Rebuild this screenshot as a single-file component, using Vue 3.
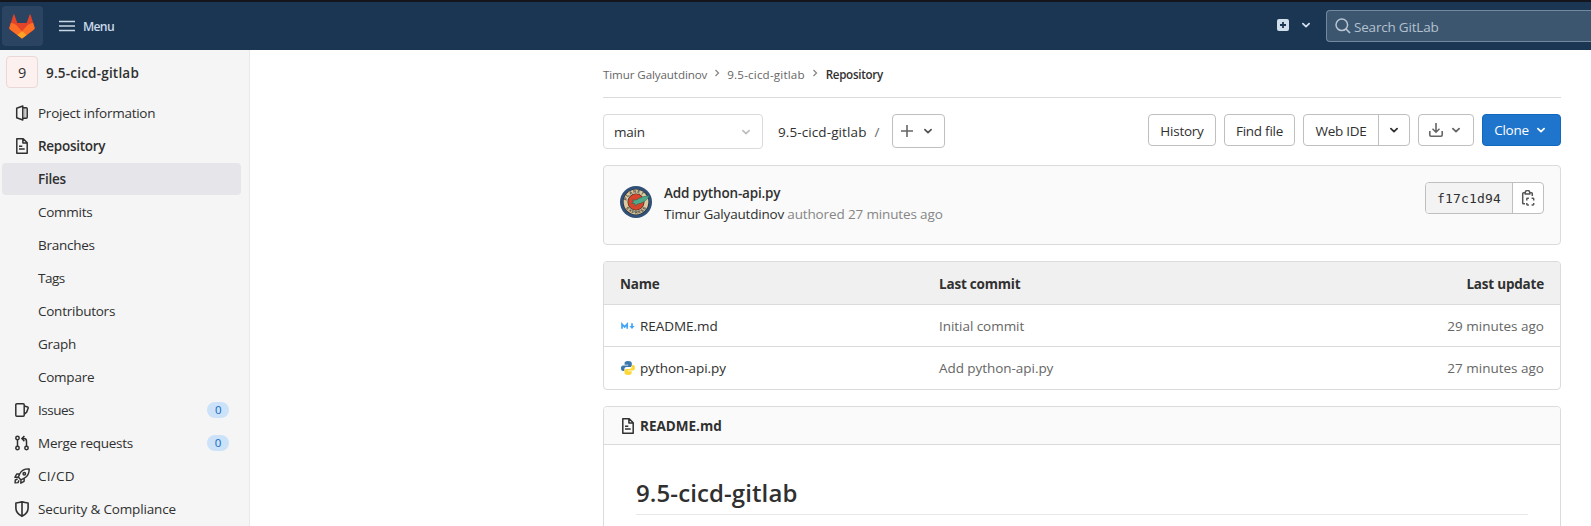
<script setup>
const nav = [
  { label: 'Project information', icon: 'project' },
  { label: 'Repository', icon: 'doc', bold: true },
  { label: 'Files', active: true, bold: true },
  { label: 'Commits' },
  { label: 'Branches' },
  { label: 'Tags', tight: true },
  { label: 'Contributors' },
  { label: 'Graph' },
  { label: 'Compare' },
  { label: 'Issues', icon: 'issues', count: 0, tight: true },
  { label: 'Merge requests', icon: 'merge', count: 0 },
  { label: 'CI/CD', icon: 'rocket', loose: true },
  { label: 'Security & Compliance', icon: 'shield', wide: true },
]
const files = [
  { name: 'README.md', kind: 'md', commit: 'Initial commit', updated: '29 minutes ago' },
  { name: 'python-api.py', kind: 'py', commit: 'Add python-api.py', updated: '27 minutes ago' },
]
</script>

<template>
  <div class="page">
    <svg width="0" height="0" class="defs">
      <symbol id="chevron" viewBox="0 0 16 16"><path d="M4.900 6.700 8 9.600l3.100-2.900" fill="none" stroke="currentColor" stroke-width="1.800" stroke-linecap="round" stroke-linejoin="round" /></symbol>
      <symbol id="doc" viewBox="0 0 16 16"><path d="M2.800.800h6.400l4 4v10.400H2.800zM8.900 1v4.100h4M5 8.200h3.300M5 11h5.700" fill="none" stroke="currentColor" stroke-width="1.500" stroke-linejoin="round" /></symbol>
      <symbol id="project" viewBox="0 0 16 16"><path d="M8.800 1v14L2.700 12.800V3.200zM9 2.800h3.200a1 1 0 0 1 1 1v8.400a1 1 0 0 1-1 1H9" fill="none" stroke="currentColor" stroke-width="1.500" stroke-linejoin="round" /><path d="M10.900 3v10" stroke="currentColor" stroke-width=".5" /></symbol>
      <symbol id="issues" viewBox="0 0 16 16"><path d="M2.800 1.800h6.400a1 1 0 0 1 1 1v10.400a1 1 0 0 1-1 1H2.800a1 1 0 0 1-1-1V2.800a1 1 0 0 1 1-1zM10.400 4.100l3.200.800c.5.200.7.600.6 1l-1.500 4.200-2.300 2" fill="none" stroke="currentColor" stroke-width="1.500" stroke-linejoin="round" /></symbol>
      <symbol id="merge" viewBox="0 0 16 16"><g fill="none" stroke="currentColor" stroke-width="1.500"><circle cx="3.500" cy="3" r="1.700" /><circle cx="3.500" cy="13" r="1.700" /><circle cx="12.500" cy="13" r="1.700" /><path d="M3.500 4.700v6.600M12.500 11.300V6.200a2.600 2.600 0 0 0-2.600-2.600H8.200M10.400 1 7.900 3.600l2.500 2.600" /></g></symbol>
      <symbol id="rocket" viewBox="0 0 16 16"><g fill="none" stroke="currentColor" stroke-width="1.450" stroke-linejoin="round"><path d="M15.200.900c-4.600-.2-7.800 1.500-9.400 4.900L4.300 9.100l2.700 2.800 3.300-1.700c3.400-1.700 5-4.800 4.900-9.300zM5.600 5.900 2.700 6 .9 9.300l3.300-.2M10.200 10.300l-.1 3-3.300 1.900.2-3.300M3.600 11l-2.300 1-.2 2.900 2.900-.3 1-2.200" /><circle cx="10.300" cy="5.700" r="1.250" /></g></symbol>
      <symbol id="shield" viewBox="0 0 16 16"><path d="M8 .8c2 .7 4 1.100 6.100 1.200V7c0 3.700-2.200 6.500-6.100 8.200C4.100 13.500 1.900 10.700 1.900 7V2C4 1.900 6 1.500 8 .8zM8 1v14" fill="none" stroke="currentColor" stroke-width="1.600" stroke-linejoin="round" /></symbol>
      <symbol id="md" viewBox="0 0 16 16"><path d="M2 10.700V6.200L4.600 8.900l2.600-2.700v4.500M12 5.200v4" fill="none" stroke="#42a5f5" stroke-width="1.700" /><path d="M9.400 8h5.200L12 11z" fill="#42a5f5" /></symbol>
      <symbol id="py" viewBox="0 0 16 16"><path d="M7.900 1C5.300 1 4.600 2 4.600 3.200v1.500h3.600v.7H3.100C1.600 5.400 1 6.500 1 8.200s.8 2.800 2 2.800h1.400V9.200c0-1.200.9-2.100 2.200-2.100h3.500c1 0 1.700-.8 1.700-1.800V3.200C11.800 1.700 10.400 1 7.900 1z" fill="#3c78aa" /><path d="M8.300 15c2.600 0 3.400-1 3.400-2.200v-1.500H8v-.7h5c1.500 0 2-1.200 2-2.800S14.300 5 13 5h-1.200v1.800c0 1.200-.9 2.100-2.200 2.100H6.200c-1 0-1.700.8-1.700 1.800v2.100C4.500 14.300 5.900 15 8.300 15z" fill="#fdd835" /></symbol>
    </svg>

    <header class="topbar">
      <div class="logo">
        <svg width="26" height="25" viewBox="0 0 26 25">
          <path d="M13 24.500 1.300 15.800A2.300 2.300 0 0 1 .5 13.200L4.300 1.100q.6-1.500 1.200 0l2.800 7.900h9.400l2.800-7.900q.6-1.500 1.200 0l3.800 12.100a2.300 2.300 0 0 1-.8 2.600z" fill="#e24329" />
          <path d="M13 24.500 1.300 15.800A2.300 2.300 0 0 1 .5 13.200L1.800 9.100c2.300.2 4.400 1.100 6.300 2.600l4.900 5.500 4.900-5.500c1.900-1.500 4-2.400 6.300-2.600l1.300 4.100a2.300 2.300 0 0 1-.8 2.600z" fill="#fc6d26" />
          <path d="M13 24.500 8.300 20.900 13 17.200l4.700 3.700z" fill="#fca326" />
        </svg>
      </div>
      <svg class="burger" width="16" height="12"><path d="M0 1.500h16M0 6h16M0 10.500h16" stroke="#c9d6e4" stroke-width="1.600" /></svg>
      <span class="menu">Menu</span>
      <div class="spacer"></div>
      <svg class="plusbox" width="12" height="12"><rect width="12" height="12" rx="2" fill="#d1dfed" /><path d="M6 3v6M3 6h6" stroke="#1b3653" stroke-width="1.800" /></svg>
      <svg class="topchev" width="16" height="16"><use href="#chevron" /></svg>
      <div class="search">
        <svg width="16" height="16"><circle cx="6.800" cy="6.800" r="5.800" fill="none" stroke="#b8c6d4" stroke-width="1.500" /><path d="m11 11 4 4" stroke="#b8c6d4" stroke-width="1.700" /></svg>
        <span>Search GitLab</span>
      </div>
    </header>

    <div class="body">
      <aside class="sidebar">
        <div class="project"><span class="avatar">9</span><span class="pname">9.5-cicd-gitlab</span></div>
        <div v-for="n in nav" :key="n.label" class="item" :class="{ active: n.active, bold: n.bold, wide: n.wide, loose: n.loose, tight: n.tight }">
          <span class="ico"><svg v-if="n.icon" width="16" height="16"><use :href="'#' + n.icon" /></svg></span>
          <span class="label">{{ n.label }}</span>
          <span v-if="n.count !== undefined" class="count">{{ n.count }}</span>
        </div>
      </aside>

      <main class="main">
        <nav class="crumbs">
          <span>Timur Galyautdinov</span>
          <svg width="8" height="8"><path d="m2.500 1 3 3-3 3" /></svg>
          <span class="repo">9.5-cicd-gitlab</span>
          <svg width="8" height="8"><path d="m2.500 1 3 3-3 3" /></svg>
          <b>Repository</b>
        </nav>

        <div class="tools">
          <div class="select"><span>main</span><svg width="16" height="16"><use href="#chevron" /></svg></div>
          <span class="path">9.5-cicd-gitlab</span><span class="slash">/</span>
          <div class="btn add">
            <svg width="14" height="14"><path d="M7 1v12M1 7h12" stroke="#666" stroke-width="1.600" /></svg>
            <svg width="16" height="16"><use href="#chevron" /></svg>
          </div>
          <div class="spacer"></div>
          <div class="btn history">History</div>
          <div class="btn find">Find file</div>
          <div class="btn ide"><span>Web IDE</span><i><svg width="16" height="16"><use href="#chevron" /></svg></i></div>
          <div class="btn down">
            <svg width="16" height="16"><path d="M8 1v9M4.500 6.800 8 10.200l3.500-3.400M1.800 9v4a1.200 1.200 0 0 0 1.200 1.200h10a1.200 1.200 0 0 0 1.200-1.200V9" fill="none" stroke="#666" stroke-width="1.600" /></svg>
            <svg width="16" height="16"><use href="#chevron" /></svg>
          </div>
          <div class="btn clone">Clone<svg width="16" height="16"><use href="#chevron" /></svg></div>
        </div>

        <section class="commit">
          <svg class="face" width="32" height="32" viewBox="0 0 32 32">
            <defs>
              <path id="arcTop" d="M7 19.300A9.500 9.500 0 1 1 25 19.300" />
              <path id="arcBottom" d="M4.300 18A11.900 11.900 0 0 0 27.700 18" />
            </defs>
            <circle cx="16" cy="16" r="16" fill="#305078" />
            <circle cx="16" cy="16" r="13" fill="#252b30" />
            <circle cx="16" cy="16" r="12.400" fill="#dcc9a0" />
            <circle cx="16" cy="16" r="8.500" fill="#29302f" />
            <circle cx="16" cy="16" r="7.900" fill="#d7452c" />
            <text class="ring"><textPath href="#arcTop" startOffset="13%">PLANET</textPath></text>
            <text class="ring"><textPath href="#arcBottom" startOffset="14%">EXPRESS</textPath></text>
            <path d="M29.500 9.800c-5 .1-9.500 1.900-13.300 4.100l-3.900.200 1.600 1.500-2.200 1.700 3.200.4.600 2.500 1.800-2.200c5.100-.6 9.500-3.500 12.200-8.200z" fill="#4eaa8b" stroke="#255b50" stroke-width=".5" />
          </svg>
          <div class="info">
            <div class="subject">Add python-api.py</div>
            <div class="author"><span>Timur Galyautdinov</span> authored 27 minutes ago</div>
          </div>
          <div class="sha">
            <span>f17c1d94</span>
            <i><svg width="16" height="16"><g fill="none" stroke="#555" stroke-width="1.500"><path d="M5 13.700H3.500a.8.800 0 0 1-.8-.8V3.500a.8.800 0 0 1 .8-.8H5M10 2.700h1.500a.8.800 0 0 1 .8.800V6M5.300 3.900V2.200C5.300 0 9.700 0 9.700 2.200v1.700z" /><path d="M6.800 10.400V9a.7.700 0 0 1 .7-.7h1.400M11.600 8.300H13a.7.700 0 0 1 .7.700v1.400M13.700 12.900v1.400a.7.700 0 0 1-.7.700h-1.400M8.900 15H7.500a.7.700 0 0 1-.7-.7v-1.400" /></g></svg></i>
          </div>
        </section>

        <section class="table">
          <div class="row head"><span>Name</span><span>Last commit</span><span>Last update</span></div>
          <div v-for="f in files" :key="f.name" class="row">
            <span class="file"><svg width="16" height="16"><use :href="'#' + f.kind" /></svg>{{ f.name }}</span>
            <span>{{ f.commit }}</span><span class="when">{{ f.updated }}</span>
          </div>
        </section>

        <section class="readme">
          <div class="rhead"><svg width="16" height="16"><use href="#doc" /></svg><span>README.md</span></div>
          <div class="rbody"><h1>9.5-cicd-gitlab</h1></div>
        </section>
      </main>
    </div>
  </div>
</template>

<style>
body { margin: 0; overflow: hidden; background: #fff; }
</style>

<style scoped>
* { box-sizing: border-box; }
.page { width: 1591px; height: 526px; overflow: hidden; font: 13.5px/20px "Open Sans", "Noto Sans", sans-serif; letter-spacing: -.25px; color: #303030; white-space: nowrap; }
.defs { position: absolute; }
svg { flex: none; display: block; }
i { font-style: normal; }
.spacer { flex: 1; }
.topbar { height: 50px; background: #1b3653; border-top: 2px solid #15151d; display: flex; align-items: center; color: #d1dfed; }
.logo { width: 41px; height: 40px; margin-left: 2px; border-radius: 4px; background: #2a4461; display: flex; align-items: center; justify-content: center; }
.logo svg { margin-right: 1px; }
.burger { margin-left: 16px; }
.menu { margin: 2px 0 0 8px; font-size: 12.200px; font-weight: 600; letter-spacing: -.7px; color: #c9d8e8; }
.plusbox { margin-right: 9px; margin-top: -2px; }
.topchev { margin-right: 12px; margin-top: -2px; }
.search { width: 265px; height: 32px; border: 1px solid #7389a0; border-right: 0; border-radius: 4px 0 0 4px; background: #3d566f; display: flex; align-items: center; padding-left: 8px; gap: 3px; color: #b3c1cf; letter-spacing: -.2px; }
.search span { padding-top: 2px; }
.body { display: flex; height: 476px; }
.sidebar { width: 250px; background: #f5f5f5; border-right: 1px solid #e9e9e9; }
.project { display: flex; align-items: center; height: 32px; margin: 6px 0 9px 6px; }
.avatar { width: 32px; height: 32px; border: 1px solid #ead8d8; border-radius: 4px; background: #fcf1ef; text-align: center; line-height: 31px; font-size: 14.500px; }
.pname { margin-left: 8px; padding-top: 2px; font-weight: 600; letter-spacing: .2px; }
.item { height: 32px; margin: 0 8px 1px 2px; border-radius: 4px; display: flex; align-items: center; padding: 0 12px; }
.item.active { background: #e6e6ea; }
.item.bold { font-weight: 600; letter-spacing: -.28px; }
.item.wide { letter-spacing: -.15px; }
.item.loose { letter-spacing: .25px; }
.item.tight { letter-spacing: -.5px; }
.ico { width: 16px; margin-right: 8px; }
.count { margin-left: auto; width: 22px; height: 16px; border-radius: 8px; background: #cbe2f9; color: #1068bf; font-size: 11.500px; line-height: 16px; text-align: center; }
.main { margin-left: 353px; width: 958px; }
.crumbs { height: 48px; border-bottom: 1px solid #dbdbdb; display: flex; align-items: center; font-size: 11.600px; color: #666; gap: 6px; padding-top: 2px; letter-spacing: -.1px; }
.crumbs .repo { letter-spacing: .18px; }
.crumbs b { font-weight: 600; color: #303030; letter-spacing: -.3px; margin-left: 1px; }
.crumbs path { fill: none; stroke: #888; stroke-width: 1.300; }
.crumbs svg { margin-top: -3px; }
.tools { display: flex; align-items: flex-start; height: 67px; padding-top: 16px; }
.select { width: 160px; height: 35px; border: 1px solid #dbdbdb; border-radius: 4px; display: flex; align-items: center; justify-content: space-between; padding: 0 8px 0 10px; }
.select svg { color: #bfbfbf; }
.path { margin-left: 15px; line-height: 36px; letter-spacing: .1px; }
.slash { width: 6px; margin-left: 8px; line-height: 36px; color: #666; }
.btn { height: 32px; border: 1px solid #bfbfbf; border-radius: 4px; display: flex; align-items: center; justify-content: center; margin-left: 8px; line-height: 32px; }
.add { width: 53px; height: 34px; margin-left: 11px; gap: 6px; color: #555; }
.history { width: 68px; padding-top: 1px; }
.find { width: 71px; padding-top: 1px; }
.ide { width: 107px; }
.ide span { flex: 1; text-align: center; padding-top: 1px; }
.ide i { width: 31px; height: 30px; border-left: 1px solid #bfbfbf; display: flex; align-items: center; justify-content: center; }
.down { width: 56px; gap: 4px; color: #666; }
.clone { width: 79px; background: #1f75cb; border-color: #1068bf; color: #fff; gap: 4px; }
.commit { height: 80px; border: 1px solid #dbdbdb; border-radius: 4px; background: #fafafa; display: flex; align-items: flex-start; padding: 16px; }
.face { margin-top: 4px; }
.ring { font: 700 4.200px "Liberation Sans", sans-serif; fill: #393a36; letter-spacing: .7px; }
.info { margin: 1px 0 0 12px; line-height: 21px; }
.subject { font-weight: 600; letter-spacing: -.17px; }
.author { color: #868686; letter-spacing: -.14px; }
.author span { color: #303030; letter-spacing: -.2px; }
.sha { margin-left: auto; width: 119px; height: 32px; border: 1px solid #bfbfbf; border-radius: 4px; display: flex; overflow: hidden; background: #fff; }
.sha span { width: 87px; background: #f3f3f3; border-right: 1px solid #bfbfbf; text-align: center; font: 13px/31px "DejaVu Sans Mono", monospace; letter-spacing: .15px; }
.sha i { flex: 1; display: flex; align-items: center; justify-content: center; }
.table { margin-top: 16px; height: 129px; border: 1px solid #dbdbdb; border-radius: 4px; overflow: hidden; }
.row { display: grid; grid-template-columns: 319px 1fr 200px; padding: 0 16px; height: 42px; align-items: center; color: #666; border-bottom: 1px solid #dbdbdb; letter-spacing: -.05px; }
.row:last-child { border: 0; }
.row span:last-child { text-align: right; }
.row .when { letter-spacing: 0; }
.row.head { height: 43px; padding-top: 2px; background: #f0f0f0; color: #303030; font-weight: 700; letter-spacing: -.2px; }
.file { display: flex; align-items: center; gap: 4px; color: #303030; }
.readme { margin-top: 16px; height: 130px; border: 1px solid #dbdbdb; border-radius: 4px 4px 0 0; overflow: hidden; }
.rhead { height: 38px; background: #fafafa; border-bottom: 1px solid #dbdbdb; display: flex; align-items: center; gap: 4px; padding-left: 16px; font-weight: 700; letter-spacing: 0; }
.rbody { padding: 30px 32px 0; }
h1 { margin: 0; height: 40px; border-bottom: 1px solid #e8e8e8; font-size: 24px; line-height: 35px; font-weight: 600; letter-spacing: .1px; }
</style>
